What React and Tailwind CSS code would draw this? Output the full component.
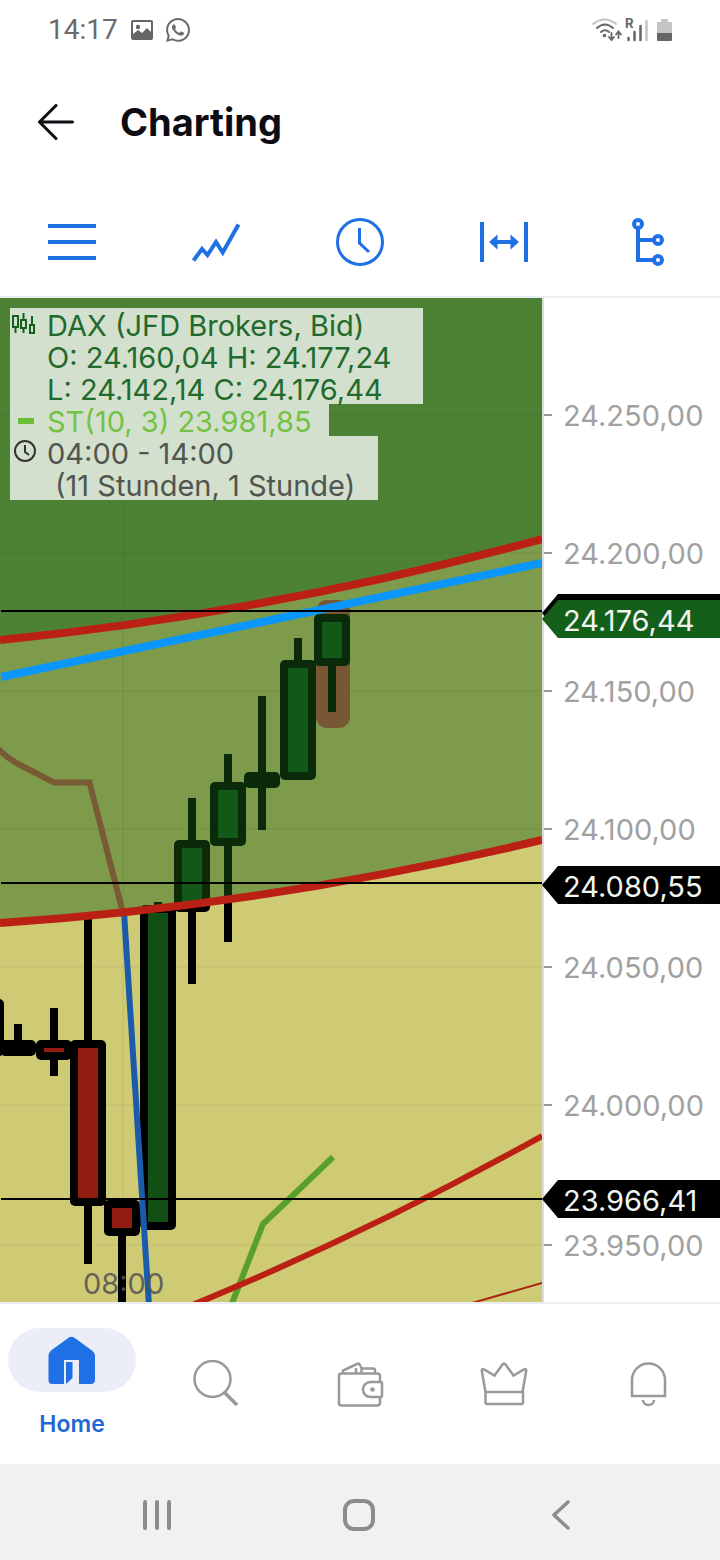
import { FaWhatsapp } from 'react-icons/fa'

const CHART_TOP = 298
const CHART_HEIGHT = 1004

const ticks = [
  { y: 415, label: '24.250,00' },
  { y: 553, label: '24.200,00' },
  { y: 691, label: '24.150,00' },
  { y: 829, label: '24.100,00' },
  { y: 967, label: '24.050,00' },
  { y: 1105, label: '24.000,00' },
  { y: 1245, label: '23.950,00' },
]

const levels = [611, 883, 1199]

const tags = [
  { y: 619, label: '24.176,44', fill: '#14601a' },
  { y: 885, label: '24.080,55', fill: '#000' },
  { y: 1199, label: '23.966,41', fill: '#000' },
]

// x is the centre; high/low are the wick ends, top/bottom the body with its outline
const candles = [
  { x: -14, high: 999, low: 1056, top: 999, bottom: 1056 },
  { x: 18, high: 1024, low: 1056, top: 1040, bottom: 1056 },
  { x: 54, high: 1008, low: 1076, top: 1040, bottom: 1060, down: true },
  { x: 88, high: 916, low: 1264, top: 1040, bottom: 1206, down: true },
  { x: 122, high: 1200, low: 1304, top: 1200, bottom: 1236, down: true },
  { x: 158, high: 902, low: 1230, top: 905, bottom: 1230 },
  { x: 192, high: 798, low: 984, top: 840, bottom: 912 },
  { x: 228, high: 754, low: 942, top: 782, bottom: 846 },
  { x: 262, high: 696, low: 830, top: 772, bottom: 788 },
  { x: 298, high: 638, low: 780, top: 660, bottom: 780 },
  { x: 332, high: 614, low: 712, top: 614, bottom: 666 },
]

function Candles({ outline, up, clip }) {
  return (
    <g clipPath={clip}>
      {candles.map((c) => (
        <g key={c.x}>
          <rect x={c.x - 4} y={c.high} width="8" height={c.low - c.high} fill={outline} />
          <rect x={c.x - 18} y={c.top} width="36" height={c.bottom - c.top} rx="5" fill={outline} />
          {c.bottom - c.top > 16 && (
            <rect
              x={c.x - 10}
              y={c.top + 8}
              width="20"
              height={c.bottom - c.top - 16}
              fill={c.down ? '#931b10' : up}
            />
          )}
        </g>
      ))}
    </g>
  )
}

function Plot() {
  return (
    <svg
      className="block w-full h-[1004px]"
      viewBox={`0 ${CHART_TOP} 542 ${CHART_HEIGHT}`}
      preserveAspectRatio="xMaxYMin slice"
      role="img"
      aria-label="DAX candlestick chart"
    >
      <defs>
        <clipPath id="above">
          <path d="M0 298V923Q271 905 542 840V298z" />
        </clipPath>
        <clipPath id="below">
          <path d="M-40 1310V923H0Q271 905 542 840V1310z" />
        </clipPath>
      </defs>
      <rect y="298" width="542" height="1004" fill="#cfca74" />
      <path d="M0 298V923Q271 905 542 840V298z" fill="#7d9b4a" />
      <path d="M0 298V640Q271 613 542 539V298z" fill="#4d8235" />

      <g stroke="#000" strokeOpacity="0.03" strokeWidth="2">
        {ticks.map((t) => (
          <line key={t.y} x1="0" x2="542" y1={t.y} y2={t.y} />
        ))}
        <line x1="123" x2="123" y1="298" y2="1302" />
      </g>

      <rect x="316" y="600" width="34" height="128" rx="11" fill="#785734" />
      <Candles outline="#0a2a0a" up="#125818" clip="url(#above)" />
      <Candles outline="#000" up="#114f15" clip="url(#below)" />

      <g fill="none">
        <path d="M-4 747Q8 759 22 766L54 782.500H89.500L123 913" stroke="#785a34" strokeWidth="6" />
        <path d="M124 912L149 1306" stroke="#1b5bac" strokeWidth="6" />
        <path d="M231 1306L263 1224L333 1157" stroke="#59a02b" strokeWidth="6" />
        <path d="M1 677L542 563" stroke="#0a96fb" strokeWidth="8" />
        <g stroke="#ba2114">
          <path d="M0 640Q271 613 542 539" strokeWidth="8" />
          <path d="M0 923Q271 905 542 840" strokeWidth="8" />
          <path d="M190 1306Q368 1233 542 1136" strokeWidth="6" />
          <path d="M472 1303L542 1283" strokeWidth="2" stroke="#a82612" />
        </g>
      </g>
      {levels.map((y) => (
        <line key={y} x1="1" x2="542" y1={y} y2={y} stroke="#000" strokeWidth="2" />
      ))}
      <text x="83" y="1294" fontSize="29" fill="#555" fillOpacity="0.9">
        08:00
      </text>
    </svg>
  )
}

function PriceAxis() {
  return (
    <svg
      className="block shrink-0 w-[178px] h-[1004px]"
      viewBox={`542 ${CHART_TOP} 178 ${CHART_HEIGHT}`}
      fontSize="29"
      aria-label="Price axis"
    >
      <rect x="542" y="298" width="2" height="1004" fill="#dcdcdc" />
      {ticks.map((t) => (
        <g key={t.y}>
          <rect x="544" y={t.y - 1} width="8" height="2" fill="#999" />
          <text x="563" y={t.y + 11} fill="#a1a1a1">
            {t.label}
          </text>
        </g>
      ))}
      <path d="M542 613L558 594H720V632H558z" fill="#000" />
      {tags.map((t) => (
        <g key={t.y}>
          <path d={`M542 ${t.y}l16-19H720v38H558z`} fill={t.fill} />
          <text x="563" y={t.y + 12} fill="#f1f5f1">
            {t.label}
          </text>
        </g>
      ))}
    </svg>
  )
}

function Legend() {
  return (
    <div className="absolute left-[10px] top-[10px] text-[29px] leading-8 whitespace-nowrap">
      <div className="flex w-[413px] h-24 bg-[#d3e0cd] text-[#1f6a2c]">
        <div className="w-[37px] pl-0.5 pt-1">
          <svg width="24" height="22" fill="none" stroke="#14601a" strokeWidth="2">
            <path d="M1 4h5v11H1zM3.500 15v6M9 8h5v8H9zM11.500 1v7M11.500 16v5M18 13h4v8h-4zM20 4v9" />
          </svg>
        </div>
        <div className="pt-0.5">
          <p>DAX (JFD Brokers, Bid)</p>
          <p>O: 24.160,04 H: 24.177,24</p>
          <p>L: 24.142,14 C: 24.176,44</p>
        </div>
      </div>
      <div className="flex w-[319px] h-8 bg-[#d3e0cd] text-[#73c244]">
        <div className="w-[37px] pl-2 pt-3.5">
          <div className="w-4 h-1.5 bg-[#6abf35]" />
        </div>
        <p className="pt-0.5">ST(10, 3) 23.981,85</p>
      </div>
      <div className="flex w-[368px] h-16 bg-[#d3e0cd] text-[#51554f]">
        <div className="w-[37px] pl-[3px] pt-[3px]">
          <svg width="24" height="24" fill="none" stroke="#333" strokeWidth="2">
            <circle cx="12" cy="12" r="10" />
            <path d="M12 6v7l4 3" />
          </svg>
        </div>
        <div className="pt-0.5">
          <p>04:00 - 14:00</p>
          <p className="pl-2">(11 Stunden, 1 Stunde)</p>
        </div>
      </div>
    </div>
  )
}

function StatusBar() {
  return (
    <div className="flex items-center justify-between h-[60px] px-12 text-[#6b6b6b]">
      <div className="flex items-center gap-3">
        <span className="font-[Roboto,sans-serif] text-[28px] leading-8">14:17</span>
        <svg width="24" height="24" viewBox="0 0 24 24">
          <rect x="2" y="3" width="20" height="18" rx="1" fill="none" stroke="#666" strokeWidth="2" />
          <circle cx="8" cy="9" r="2.2" fill="#666" />
          <path d="M2 17l6-5 4 3 5-5 5 5v6H2z" fill="#666" />
        </svg>
        <FaWhatsapp className="w-6 h-7" />
      </div>
      <svg width="80" height="44" viewBox="592 7 80 44" fill="none" strokeLinecap="round">
        <path d="M593 23q12-9 23 0" stroke="#c4c4c4" strokeWidth="2" />
        <path d="M597 27q8-7 16 0M601 31q4-3.500 8 0" stroke="#666" strokeWidth="2" />
        <circle cx="604.500" cy="34.500" r="1.800" fill="#666" />
        <path d="M611.500 32v6M609 36l2.500 3 2.500-3M618.500 37v-6M616 33.500l2.500-3 2.500 3" stroke="#666" strokeWidth="1.800" />
        <text x="625" y="27" fontSize="13" fontWeight="700" fill="#666">
          R
        </text>
        <path d="M628.500 37v2M634.500 31v8M640.500 25v14" stroke="#666" strokeWidth="2.500" />
        <path d="M646.500 20v19" stroke="#c4c4c4" strokeWidth="2.500" />
        <path d="M657 21h4v-3h7v3h4v11h-15z" fill="#c4c4c4" />
        <path d="M657 32h15v7q0 1-1 1h-13q-1 0-1-1z" fill="#666" />
      </svg>
    </div>
  )
}

const tools = [
  {
    name: 'Menu',
    icon: <path d="M0 8h48M0 24h48M0 40h48" strokeWidth="4" />,
  },
  {
    name: 'Chart type',
    icon: <path d="M1.500 42.500L10 31l5.500 6L24 24l6.700 10.500L46.500 6.500" strokeWidth="4" />,
  },
  {
    name: 'Time frame',
    icon: (
      <>
        <circle cx="24" cy="24" r="22.500" strokeWidth="3" />
        <path d="M23.500 10v15l9.500 9" strokeWidth="3" />
      </>
    ),
  },
  {
    name: 'Range',
    icon: (
      <>
        <path d="M2 4v40M46 4v40M15 24h18" strokeWidth="4" />
        <path d="M9 24l8.500-7.500v15zM39 24l-8.500-7.500v15z" fill="#1f6fe5" stroke="none" />
      </>
    ),
  },
  {
    name: 'Indicators',
    icon: (
      <g strokeWidth="4">
        <path d="M14 10v32h16M14 22h16" />
        <circle cx="14" cy="6" r="4" />
        <circle cx="34" cy="22" r="4" />
        <circle cx="34" cy="42" r="4" />
      </g>
    ),
  },
]

function Toolbar() {
  return (
    <div className="grid grid-cols-5 justify-items-center pt-[34px] pb-[30px] border-b-2 border-[#e9eef5]">
      {tools.map((tool) => (
        <button key={tool.name} type="button" aria-label={tool.name}>
          <svg className="block" width="48" height="48" fill="none" stroke="#1f6fe5">
            {tool.icon}
          </svg>
        </button>
      ))}
    </div>
  )
}

const navItems = [
  {
    name: 'Search',
    icon: (
      <>
        <circle cx="20.500" cy="19" r="18" />
        <path d="M33 33l12 12" strokeWidth="3.500" />
      </>
    ),
  },
  {
    name: 'Wallet',
    icon: (
      <>
        <path d="M44 22v-6q0-2.500-3-2.500H5.500q-2.500 0-2.500 2.500v27q0 2.500 2.500 2.500H41q3 0 3-3V37" />
        <path d="M45 22H34.500a7.500 7.500 0 0 0 0 15H45q1 0 1-1V23q0-1-1-1z" />
        <path d="M7 13v-2.500L21 4q2-1 3 1l1.500 3v5M20 13V8M25.500 8.500H37q2 0 2 2v3" />
        <circle cx="36.500" cy="29.500" r="2.300" fill="#999" stroke="none" />
      </>
    ),
  },
  {
    name: 'Premium',
    icon: (
      <>
        <path d="M5.500 32L1.800 11Q1.500 8.500 4 9.500L14.500 15.500L22.500 4.500Q24 2.500 25.500 4.500L33.500 15.500L44 9.500Q46.500 8.500 46.200 11L42.500 32" />
        <path d="M5.500 32h37.500v10.500q0 1.500-1.500 1.500H7q-1.500 0-1.500-1.500z" />
      </>
    ),
  },
  {
    name: 'Notifications',
    icon: (
      <>
        <path d="M8 36V20a16.500 16.500 0 0 1 33 0V36z" />
        <path d="M19 40a5.500 5 0 0 0 11 0" />
      </>
    ),
  },
]

function BottomNav() {
  return (
    <nav className="grid grid-cols-5 justify-items-center h-[162px] pt-6 border-t-2 border-[#ececf4]">
      <a href="#home" className="flex flex-col items-center text-[#1f67d2]">
        <span className="flex items-center justify-center w-32 h-16 rounded-full bg-[#ebeef6]">
          <svg width="48" height="48" fill="#1f6fe5">
            <path d="M3 14.500L21 1.500Q23.500 0 26 1.500L44 14.500Q47 17 47 19.500V44q0 4-4 4H31V24H16v24H4Q0.500 48 0.500 44V19.500Q0.500 17 3 14.500z" />
            <path d="M18 26h6.500v16L18 48z" />
          </svg>
        </span>
        <span className="mt-4 text-[23px] leading-8 font-semibold">Home</span>
      </a>
      {navItems.map((item) => (
        <a key={item.name} href={`#${item.name.toLowerCase()}`} aria-label={item.name} className="pt-8">
          <svg className="block" width="48" height="48" fill="none" stroke="#999" strokeWidth="2.500">
            {item.icon}
          </svg>
        </a>
      ))}
    </nav>
  )
}

function SystemNav() {
  return (
    <div className="grid grid-cols-3 justify-items-center items-center h-24 pl-14 pr-[58px] pt-1.5 bg-[#f1f1f1]">
      <button type="button" aria-label="Recent apps">
        <svg className="block" width="32" height="32" stroke="#8c8c8c" strokeWidth="4" strokeLinecap="round">
          <path d="M4 3v26M16 3v26M28 3v26" />
        </svg>
      </button>
      <button type="button" aria-label="Home screen">
        <svg className="block" width="32" height="32" fill="none" stroke="#8c8c8c" strokeWidth="4">
          <rect x="2" y="2" width="28" height="28" rx="9" />
        </svg>
      </button>
      <button type="button" aria-label="Go back">
        <svg className="block" width="32" height="32" fill="none" stroke="#8c8c8c" strokeWidth="3.500" strokeLinecap="round" strokeLinejoin="round">
          <path d="M23 3L9 16l14 13" />
        </svg>
      </button>
    </div>
  )
}

export default function App() {
  return (
    <div className="bg-white font-[Inter,'Liberation_Sans',sans-serif]">
      <StatusBar />
      <header className="flex items-center gap-[46px] h-[124px] pl-[38px]">
        <button type="button" aria-label="Back">
          <svg className="block" width="36" height="36" fill="none" stroke="#0b0d12" strokeWidth="3" strokeLinecap="round" strokeLinejoin="round">
            <path d="M34.500 18H2M18 1.500L1.500 18L18 34.500" />
          </svg>
        </button>
        <h1 className="text-[38px] leading-[48px] font-bold text-[#0b0d12]">Charting</h1>
      </header>
      <Toolbar />
      <main className="flex">
        <div className="relative flex-1 min-w-0">
          <Plot />
          <Legend />
        </div>
        <PriceAxis />
      </main>
      <BottomNav />
      <SystemNav />
    </div>
  )
}
